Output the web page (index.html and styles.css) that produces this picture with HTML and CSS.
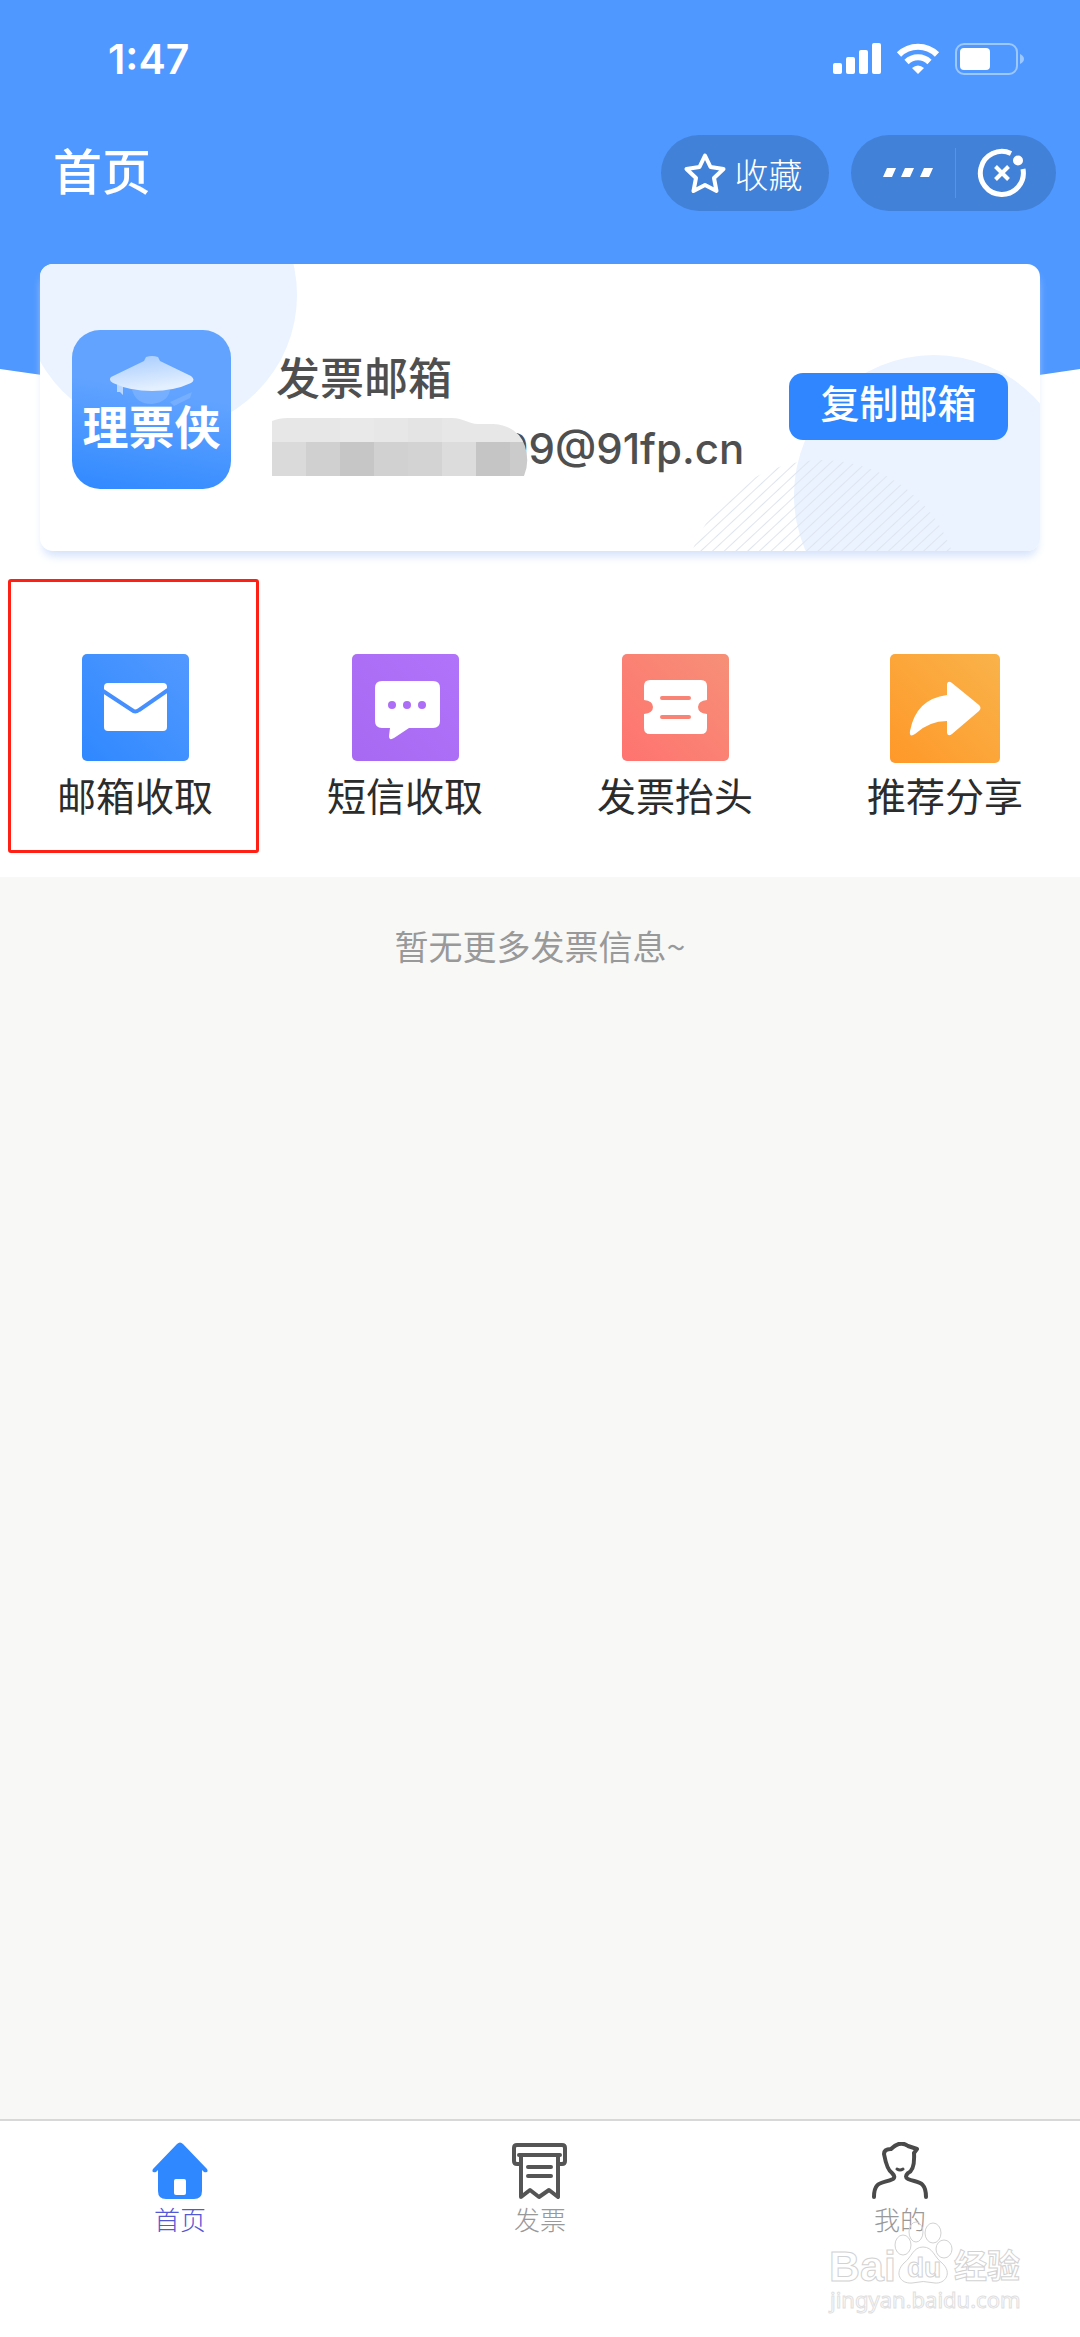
FILE: index.html
```html
<!DOCTYPE html>
<html lang="zh-CN">
<head>
  <meta charset="UTF-8" />
  <meta name="viewport" content="width=device-width, initial-scale=1.0"/>
  <title>首页</title>
  <link rel="stylesheet" href="styles.css">
</head>
<body>
  <header class="hero">
    <div class="status">
      <span class="time">1:47</span>
      <div class="status-icons">
        <svg width="48" height="32" viewBox="0 0 48 32" fill="#fff">
          <rect x="0" y="20" width="9" height="11" rx="2"/>
          <rect x="13" y="14" width="9" height="17" rx="2"/>
          <rect x="26" y="7" width="9" height="24" rx="2"/>
          <rect x="39" y="0" width="9" height="31" rx="2"/>
        </svg>
        <svg width="44" height="32" viewBox="0 0 44 32">
          <path d="M3 11.500A27 27 0 0 1 41 11.500M10.500 19A16.500 16.500 0 0 1 33.500 19" fill="none" stroke="#fff" stroke-width="6"/>
          <path d="M22 31L16 25Q22 20 28 25Z" fill="#fff"/>
        </svg>
        <svg width="70" height="32" viewBox="0 0 70 32">
          <rect x="1" y="1" width="61" height="30" rx="8" fill="none" stroke="#9cc7ff" stroke-width="2"/>
          <rect x="5" y="5" width="30" height="22" rx="4" fill="#fff"/>
          <path d="M65 11Q69 13 69 16T65 21Z" fill="#9cc7ff"/>
        </svg>
      </div>
    </div>
    <div class="titlebar">
      <h1>首页</h1>
      <button class="pill fav">
        <svg width="44" height="42" viewBox="0 0 44 42">
          <path d="M22 3.500L27.500 15L40.500 17L31 26L33.500 39L22 33L10.500 39L13 26L3.500 17L16.500 15Z" fill="none" stroke="#fff" stroke-width="4" stroke-linejoin="round"/>
        </svg>
        收藏
      </button>
      <div class="pill capsule">
        <button aria-label="更多">
          <svg width="50" height="10" viewBox="0 0 50 10" fill="#fff">
            <path d="M4 0H13L9 9H0ZM22 0H31L27 9H18ZM41 0H50L46 9H37Z"/>
          </svg>
        </button>
        <button aria-label="关闭">
          <svg width="50" height="50" viewBox="0 0 50 50" fill="none" stroke="#fff">
            <path d="M34 5.500A21.500 21.500 0 1 0 46 21" stroke-width="5"/>
            <path d="M18.500 18.500L31.500 31.500M31.500 18.500L18.500 31.500" stroke-width="4"/>
            <circle cx="41" cy="12.500" r="5" fill="#fff" stroke="none"/>
          </svg>
        </button>
      </div>
    </div>
  </header>
  <svg class="curve" viewBox="0 0 1080 41" preserveAspectRatio="none"><path d="M0 0Q540 82 1080 0Z" fill="#4f98ff"/></svg>

  <main>
    <!-- Mailbox card -->
    <section class="card">
      <svg class="card-bg left" width="260" height="170" viewBox="0 0 260 170"><circle cx="120" cy="31" r="137" fill="#eaf3ff"/></svg>
      <svg class="card-bg right" width="360" height="200" viewBox="0 0 360 200">
        <defs>
          <pattern id="lines" width="8" height="8" patternUnits="userSpaceOnUse" patternTransform="rotate(47)">
            <rect width="1" height="8" fill="#dfe5ee"/>
          </pattern>
        </defs>
        <circle cx="254" cy="144" r="140" fill="#eaf3ff"/>
        <circle cx="142" cy="247" r="138" fill="url(#lines)"/>
      </svg>
      <div class="logo">
        <svg width="88" height="50" viewBox="0 0 88 50">
          <defs>
            <linearGradient id="hat" x1="0" y1="0" x2="0.300" y2="1">
              <stop offset="0" stop-color="#a5cbff"/><stop offset="1" stop-color="#e4f0ff"/>
            </linearGradient>
          </defs>
          <path d="M24 34H62Q60 46 44 48Q28 48 24 34ZM62 46L84 36L82 42L66 50Z" fill="#86b8ff" opacity="0.600"/>
          <path d="M9 28L15 30V39L12 36H9Z" fill="#b9d7ff"/>
          <path d="M38 1Q44 -1 50 1L52 5L83 20Q88 24 83 27Q66 35 44 35Q22 35 5 27Q0 24 3 21L36 5Z" fill="url(#hat)"/>
        </svg>
        <span>理票侠</span>
      </div>
      <div class="mailbox">
        <h2>发票邮箱</h2>
        <div class="address">
          <svg width="256" height="58" viewBox="0 0 256 58">
            <defs>
              <clipPath id="blur"><path d="M0 3Q7 0 16 0H180C192 0 196 6 206 6H222Q246 8 253 28Q258 44 252 58H0Z"/></clipPath>
            </defs>
            <g clip-path="url(#blur)">
              <rect width="256" height="24" fill="#e7e7e7"/>
              <rect x="68" width="34" height="24" fill="#e9e9e9"/>
              <rect x="136" width="34" height="24" fill="#e4e4e4"/>
              <rect y="24" width="34" height="34" fill="#dadada"/>
              <rect x="34" y="24" width="34" height="34" fill="#d0d0d0"/>
              <rect x="68" y="24" width="34" height="34" fill="#c6c6c6"/>
              <rect x="102" y="24" width="34" height="34" fill="#d1d1d1"/>
              <rect x="136" y="24" width="34" height="34" fill="#d3d3d3"/>
              <rect x="170" y="24" width="34" height="34" fill="#dcdcdc"/>
              <rect x="204" y="24" width="34" height="34" fill="#c5c5c5"/>
              <rect x="238" y="24" width="18" height="34" fill="#cbcbcb"/>
            </g>
          </svg>
          <span>99@91fp.cn</span>
        </div>
      </div>
      <button class="copy">复制邮箱</button>
    </section>

    <!-- Shortcuts -->
    <nav class="menu">
      <a href="#" class="marked">
        <svg width="107" height="107" viewBox="0 0 107 107">
          <defs><linearGradient id="g1" x1="0" y1="1" x2="1" y2="0"><stop offset="0" stop-color="#2f88ff"/><stop offset="1" stop-color="#5299ff"/></linearGradient></defs>
          <rect width="107" height="107" rx="5" fill="url(#g1)"/>
          <rect x="22" y="29" width="63" height="48" rx="4" fill="#fff"/>
          <path d="M21 37L50 56Q53 59 57 56L86 36" fill="none" stroke="#468fff" stroke-width="4"/>
        </svg>
        <span>邮箱收取</span>
      </a>
      <a href="#">
        <svg width="107" height="107" viewBox="0 0 107 107">
          <defs><linearGradient id="g2" x1="0" y1="1" x2="1" y2="0"><stop offset="0" stop-color="#a869f2"/><stop offset="1" stop-color="#b273fb"/></linearGradient></defs>
          <rect width="107" height="107" rx="5" fill="url(#g2)"/>
          <path d="M30 27H81Q88 27 88 34V67Q88 74 81 74H57L42 84Q37 87 37 82L38 74H30Q23 74 23 67V34Q23 27 30 27Z" fill="#fff"/>
          <g fill="#ad6df6"><circle cx="40" cy="51" r="4"/><circle cx="55" cy="51" r="4"/><circle cx="70" cy="51" r="4"/></g>
        </svg>
        <span>短信收取</span>
      </a>
      <a href="#">
        <svg width="107" height="107" viewBox="0 0 107 107">
          <defs><linearGradient id="g3" x1="0" y1="1" x2="1" y2="0"><stop offset="0" stop-color="#ff7370"/><stop offset="1" stop-color="#f69077"/></linearGradient></defs>
          <rect width="107" height="107" rx="5" fill="url(#g3)"/>
          <path d="M28 26H79Q85 26 85 32V46Q76 47 76 53T85 60V74Q85 80 79 80H28Q22 80 22 74V60Q31 59 31 53T22 46V32Q22 26 28 26Z" fill="#fff"/>
          <path d="M40 44H67M40 63H67" stroke="#f98475" stroke-width="4" stroke-linecap="round"/>
        </svg>
        <span>发票抬头</span>
      </a>
      <a href="#">
        <svg width="110" height="109" viewBox="0 0 110 109">
          <defs><linearGradient id="g4" x1="0" y1="1" x2="1" y2="0"><stop offset="0" stop-color="#ff9829"/><stop offset="1" stop-color="#f9b34a"/></linearGradient></defs>
          <rect width="110" height="109" rx="5" fill="url(#g4)"/>
          <path d="M57 41V30Q58 26 62 29L89 51Q92 54 89 57L62 80Q58 83 57 79V67Q39 67 25 80Q19 84 20 77Q26 45 57 41Z" fill="#fff"/>
        </svg>
        <span>推荐分享</span>
      </a>
    </nav>
  </main>

  <p class="empty">暂无更多发票信息~</p>

  <footer class="tabbar">
    <a href="#" class="active">
      <svg width="58" height="58" viewBox="0 0 58 58">
        <path d="M26 2Q29 -1 32 2L56 27Q58 31 53 30L51 28V49Q51 57 43 57H15Q7 57 7 49V28L5 30Q0 31 2 27Z" fill="#2f88ff"/>
        <rect x="23" y="37" width="12" height="16" rx="2" fill="#fff"/>
      </svg>
      首页
    </a>
    <a href="#">
      <svg width="58" height="58" viewBox="0 0 58 58" fill="none" stroke="#555" stroke-width="4" stroke-linejoin="round" stroke-linecap="round">
        <path d="M9 22H6Q3 22 3 19V6Q3 3 6 3H51Q54 3 54 6V19Q54 22 51 22H48M8 13H49M10 13V55L19 48L28 55L38 48L47 55V13M17 25H40M17 34H40"/>
      </svg>
      发票
    </a>
    <a href="#">
      <svg width="58" height="58" viewBox="0 0 58 58" fill="none" stroke="#4a4a4a" stroke-width="4" stroke-linejoin="round" stroke-linecap="round">
        <path d="M3 55C3 38 12 42 22 37Q25 35 21 31Q16 28 13 12Q13 7 20 7Q29 -2 37 4L46 7L43 11Q44 28 37 31Q33 35 37 37C46 41 55 38 55 55"/>
        <path d="M26 27Q29 29 32 27" stroke-width="3"/>
      </svg>
      我的
    </a>
    <svg class="watermark" width="200" height="100" viewBox="0 0 200 100">
      <g fill="#fff" stroke="#d2d2d2" stroke-width="1">
        <text class="wm-logo" x="1" y="57">Bai</text>
        <ellipse cx="75" cy="21" rx="8" ry="10"/>
        <ellipse cx="88" cy="8" rx="7" ry="10" fill="none"/>
        <ellipse cx="105" cy="9" rx="8" ry="10"/>
        <ellipse cx="116" cy="25" rx="8" ry="9"/>
        <path d="M95 23C105 23 106 33 114 39C125 49 117 60 107 59Q95 56 84 59C72 60 66 49 76 39C84 33 85 23 95 23Z"/>
        <text class="wm-du" x="79" y="53">du</text>
        <text class="wm-cn" x="126" y="54">经验</text>
        <text class="wm-url" x="2" y="84" stroke="#e0e0e0">jingyan.baidu.com</text>
      </g>
    </svg>
  </footer>
</body>
</html>
```

FILE: styles.css
```css
* { box-sizing: border-box; }
body { margin: 0; min-height: 100vh; display: flex; flex-direction: column; background: #f8f8f7; font-family: Inter, "Noto Sans CJK SC", sans-serif; color: #2c2c2c; }
h1, h2, p { margin: 0; }
a { color: inherit; text-decoration: none; }
button { border: 0; padding: 0; background: none; color: #fff; font-family: inherit; cursor: pointer; }
svg { display: block; flex-shrink: 0; }

/* Header */
.hero { background: #4f98ff; color: #fff; height: 369px; padding: 35px 24px 0 53px; }
.status { display: flex; justify-content: space-between; align-items: center; height: 48px; padding: 0 31px 0 55px; }
.time { font-size: 41px; font-weight: 600; }
.status-icons { display: flex; gap: 15px; }
.titlebar { display: flex; align-items: center; margin-top: 51px; height: 78px; }
h1 { flex: 1; font-size: 49px; font-weight: 500; line-height: 78px; }
.pill { background: #4281d8; border-radius: 39px; height: 76px; display: flex; align-items: center; }
.fav { width: 168px; justify-content: center; gap: 8px; padding-right: 5px; font-size: 34px; font-weight: 300; margin-right: 22px; }
.capsule { width: 205px; padding: 0 7px 0 10px; }
.capsule button { flex: 1; height: 50px; display: flex; align-items: center; justify-content: center; }
.capsule button + button { border-left: 1px solid #5a93e2; }
.curve { width: 100%; height: 41px; background: #fff; }

/* Card */
main { background: #fff; }
.card { position: relative; display: flex; height: 287px; margin: -146px 40px 0; padding: 66px 32px 0; border-radius: 13px; background: #fff; box-shadow: 0 8px 10px -3px #d3e2fb; }
.card-bg { position: absolute; }
.card-bg.left { left: 0; top: 0; border-radius: 13px 0 0 0; }
.card-bg.right { right: 0; bottom: 0; border-radius: 0 0 13px 0; }
.logo { position: relative; width: 159px; height: 159px; padding-top: 26px; border-radius: 28px; background: linear-gradient(10deg, #3089ff, #61a3ff 60%); color: #fff; display: flex; flex-direction: column; align-items: center; }
.logo span { font-size: 46px; font-weight: 700; line-height: 50px; margin-top: -4px; }
.mailbox { position: relative; flex: 1; padding: 20px 0 0 41px; color: #4f4f4f; }
h2 { padding-left: 4px; font-size: 44px; font-weight: 500; line-height: 58px; }
.address { display: flex; align-items: center; height: 58px; margin-top: 10px; font-size: 42px; font-weight: 500; }
.address svg { position: relative; z-index: 1; }
.address span { margin: 2px 0 0 -26px; }
.copy { position: relative; width: 219px; height: 67px; margin-top: 43px; padding-bottom: 5px; border-radius: 14px; background: #2f86ff; font-size: 39px; font-weight: 500; line-height: 60px; }

/* Shortcuts */
.menu { display: grid; grid-template-columns: repeat(4, 1fr); padding: 28px 0 24px; }
.menu a { display: flex; flex-direction: column; align-items: center; justify-content: space-between; height: 274px; padding: 75px 0 27px; font-size: 39px; line-height: 58px; }
.menu span { margin-top: -2px; }
.marked { position: relative; }
.marked::after { content: ""; position: absolute; inset: 0 11px 0 8px; border: 3px solid #ff2015; border-radius: 3px; }

.empty { flex: 1; padding-top: 43px; text-align: center; font-family: "Noto Sans CJK SC", sans-serif; font-size: 34px; line-height: 52px; color: #999; }

/* Bottom tabs */
.tabbar { position: relative; display: grid; grid-template-columns: repeat(3, 1fr); height: 218px; padding-top: 21px; border-top: 2px solid #d8d8d8; background: #fff; }
.tabbar a { display: flex; flex-direction: column; align-items: center; gap: 2px; font-size: 26px; font-weight: 300; line-height: 38px; color: #999; }
.tabbar .active { color: #5558d6; }
.watermark { position: absolute; right: 52px; bottom: 13px; overflow: visible; }
.wm-logo { font: 700 43px "Liberation Sans", sans-serif; }
.wm-du { font: 700 28px "Liberation Sans", sans-serif; }
.wm-cn { font: 700 33px "Noto Sans CJK SC", sans-serif; }
.wm-url { font: 400 22px "Noto Sans", sans-serif; }
```
